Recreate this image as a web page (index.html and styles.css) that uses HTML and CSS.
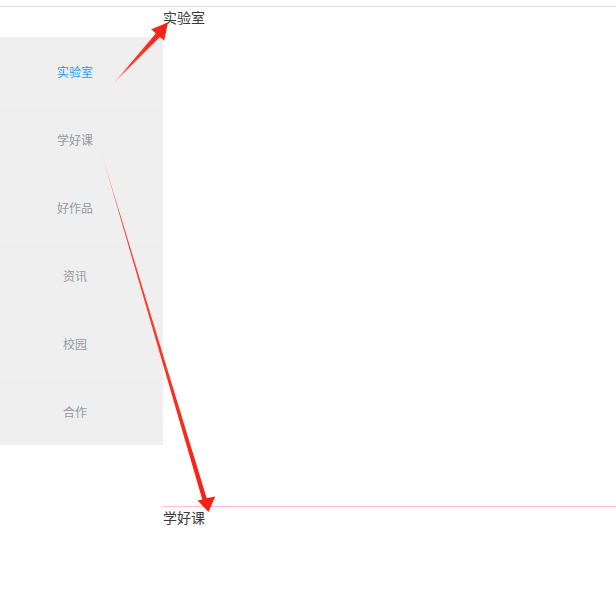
FILE: index.html
```html
<!DOCTYPE html>
<html lang="zh">
<head>
<meta charset="utf-8">
<title>Nav</title>
<link rel="stylesheet" href="styles.css">
</head>
<body>
<div class="topline"></div>
<div class="page">
  <nav class="sidebar">
    <a class="nav-item active">实验室</a>
    <a class="nav-item">学好课</a>
    <a class="nav-item">好作品</a>
    <a class="nav-item">资讯</a>
    <a class="nav-item">校园</a>
    <a class="nav-item last">合作</a>
  </nav>
  <main class="content">
    <section class="sec sec-first"><h2 class="sec-title">实验室</h2></section>
    <section class="sec sec-second"><h2 class="sec-title">学好课</h2></section>
  </main>
</div>
<svg class="annot" width="616" height="596" viewBox="0 0 616 596">
  <defs>
    <linearGradient id="g1" x1="113" y1="84" x2="168" y2="22" gradientUnits="userSpaceOnUse">
      <stop offset="0" stop-color="#ffb4ae"/>
      <stop offset="0.3" stop-color="#fb3b2b"/>
      <stop offset="1" stop-color="#f81e12"/>
    </linearGradient>
    <linearGradient id="g2" x1="100" y1="148" x2="208" y2="512" gradientUnits="userSpaceOnUse">
      <stop offset="0" stop-color="#ffd0cc"/>
      <stop offset="0.2" stop-color="#fb4a3a"/>
      <stop offset="1" stop-color="#f81e12"/>
    </linearGradient>
  </defs>
  <polygon fill="url(#g1)" points="113,84 159.8,37.1 164.2,40.5 168,22.5 151.2,29.3 155.8,33.5"/>
  <polygon fill="url(#g2)" points="100,148 202.3,499.4 197.6,500.5 208.5,512 215.2,496.6 206.7,498.2"/>
</svg>
</body>
</html>
```
FILE: styles.css
```css
html, body {
  margin: 0;
  padding: 0;
  background: #ffffff;
  font-family: "Noto Sans CJK SC", "Noto Sans", sans-serif;
}
body {
  box-sizing: border-box;
  padding-top: 6px;
  width: 616px;
  height: 596px;
  overflow: hidden;
  position: relative;
}
.topline {
  border-top: 1px solid #e3e3e3;
}
.page {
  display: flex;
  align-items: flex-start;
}
.sidebar {
  width: 163px;
  margin-top: 30px;
  background: #efefef;
  display: flex;
  flex-direction: column;
}
.nav-item {
  display: block;
  height: 67px;
  line-height: 69px;
  padding-right: 13px;
  text-align: center;
  font-size: 12px;
  color: #959aa0;
  border-bottom: 1px solid #f1f1f3;
}
.nav-item.last {
  height: 68px;
  border-bottom: none;
}
.nav-item.active {
  color: #1b9bf5;
}
.content {
  flex: 1;
}
.sec-first {
  height: 499px;
}
.sec-second {
  border-top: 1px solid #ffc0cb;
}
.sec-title {
  margin: 0;
  font-size: 14px;
  font-weight: normal;
  line-height: 20px;
  color: #3a3a3a;
}
.annot {
  position: absolute;
  left: 0;
  top: 0;
  pointer-events: none;
}
```
